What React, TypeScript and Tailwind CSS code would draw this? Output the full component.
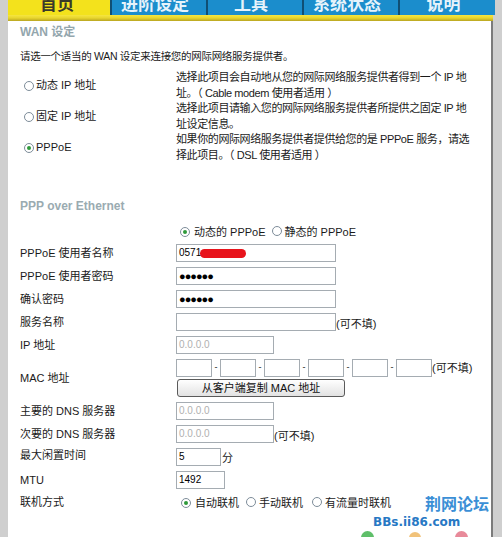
import React from "react";

function Radio({ on = false }: { on?: boolean }) {
  return (
    <span className="inline-flex w-[10px] h-[10px] rounded-full border border-[#7d8c99] bg-white items-center justify-center shrink-0">
      {on && <span className="w-[4px] h-[4px] rounded-full bg-[#2f9a3a]" />}
    </span>
  );
}

function Input({ w, value, pwd, ph }: { w: string; value?: string; pwd?: boolean; ph?: string }) {
  return (
    <div className={`${w} h-[18px] border border-[#a5acb2] bg-white flex items-center pl-[2px] text-[10px] leading-none text-black`}>
      {pwd ? <span className="text-[11px] font-bold tracking-[-1px]">●●●●●●</span> : value ? value : <span className="text-[#b0b0b0]">{ph}</span>}
    </div>
  );
}

const tabs = [
  { t: "进阶设定", w: "w-[96px]" },
  { t: "工具", w: "w-[96px]" },
  { t: "系统状态", w: "w-[96px]" },
  { t: "说明", w: "w-[97px]" },
];

export default function App() {
  return (
    <div className="w-[502px] h-[537px] overflow-hidden bg-[#cfcfcf] flex font-['Liberation_Sans','Noto_Sans_CJK_SC',sans-serif] relative">
      <div className="w-[8px] shrink-0" />
      <div className="w-[487px] shrink-0 flex flex-col">
        <div className="h-[15px] flex overflow-hidden">
          <div className="w-[102px] bg-[#f3e21c] flex justify-center pr-[4px]">
            <span className="text-[17px] leading-[17px] -mt-[4px] font-bold text-[#3a3a2a]">首页</span>
          </div>
          {tabs.map((t) => (
            <div key={t.t} className={`${t.w} bg-[#1b8dcc] border-l-2 border-[#104f74] flex justify-center pr-[8px]`}>
              <span className="text-[17px] leading-[17px] -mt-[4px] font-bold text-[#e6f3fb]">{t.t}</span>
            </div>
          ))}
        </div>
        <div className="h-[6px] w-[485px] bg-gradient-to-b from-[#f6e640] via-[#e8d52c] to-[#b9a522]" />
        <div className="flex flex-1">
          <div className="w-[483px] bg-white pl-[12px] text-[11px] text-[#1a1a1a]">
            <div className="mt-[4px] h-[14px] leading-[14px] text-[12px] font-bold text-[#93a6ad]">WAN 设定</div>
            <div className="mt-[10px] h-[14px] leading-[14px] text-[10.5px] tracking-[-0.3px]">请选一个适当的 WAN 设定来连接您的网际网络服务提供者。</div>
            <div className="mt-[7px] flex flex-col">
              {[
                { l: "动态 IP 地址", on: false, d1: "选择此项目会自动地从您的网际网络服务提供者得到一个 IP 地", d2: "址。（ Cable modem 使用者适用 ）" },
                { l: "固定 IP 地址", on: false, d1: "选择此项目请输入您的网际网络服务提供者所提供之固定 IP 地", d2: "址设定信息。" },
                { l: "PPPoE", on: true, d1: "如果你的网际网络服务提供者提供给您的是 PPPoE 服务，请选", d2: "择此项目。（ DSL 使用者适用 ）" },
              ].map((r) => (
                <div key={r.l} className="flex h-[31px]">
                  <div className="w-[156px] shrink-0 flex items-center pl-[4px] gap-[2px]">
                    <Radio on={r.on} />
                    <span>{r.l}</span>
                  </div>
                  <div className="leading-[15.5px] whitespace-nowrap tracking-[-0.4px]">
                    <div>{r.d1}</div>
                    <div>{r.d2}</div>
                  </div>
                </div>
              ))}
            </div>
            <div className="mt-[36px] h-[14px] leading-[14px] text-[12px] font-bold text-[#9aabb1]">PPP over Ethernet</div>
            <div className="mt-[12px] h-[14px] flex items-center pl-[160px]">
              <Radio on />
              <span className="ml-[4px]">动态的 PPPoE</span>
              <span className="ml-[6px]"><Radio /></span>
              <span className="ml-[3px]">静态的 PPPoE</span>
            </div>
            <div className="mt-[5px] flex flex-col gap-[5px]">
              <div className="flex items-center h-[18px]">
                <div className="w-[156px] shrink-0">PPPoE 使用者名称</div>
                <div className="relative">
                  <Input w="w-[160px]" value="0571" />
                  <div className="absolute left-[24px] top-[5px] w-[46px] h-[9px] rounded-[5px] bg-[#e8141c]" />
                </div>
              </div>
              <div className="flex items-center h-[18px]">
                <div className="w-[156px] shrink-0">PPPoE 使用者密码</div>
                <Input w="w-[160px]" pwd />
              </div>
              <div className="flex items-center h-[18px]">
                <div className="w-[156px] shrink-0">确认密码</div>
                <Input w="w-[160px]" pwd />
              </div>
              <div className="flex items-center h-[18px]">
                <div className="w-[156px] shrink-0">服务名称</div>
                <Input w="w-[160px]" />
                <span className="pt-[4px]">(可不填)</span>
              </div>
              <div className="flex items-center h-[18px]">
                <div className="w-[156px] shrink-0">IP 地址</div>
                <Input w="w-[98px]" ph="0.0.0.0" />
              </div>
              <div className="flex items-center">
                <div className="w-[156px] shrink-0">MAC 地址</div>
                <div className="flex flex-col gap-[2px]">
                  <div className="flex items-center h-[18px]">
                    {[0, 1, 2, 3, 4, 5].map((i) => (
                      <React.Fragment key={i}>
                        <Input w="w-[36px]" />
                        {i < 5 && <span className="w-[8px] text-center text-[9px]">-</span>}
                      </React.Fragment>
                    ))}
                    <span>(可不填)</span>
                  </div>
                  <button className="ml-[1px] w-[168px] h-[18px] rounded-[3px] border border-[#5a5a5a] bg-gradient-to-b from-white to-[#e2e2e2] text-[11px] leading-none text-[#111] flex items-center justify-center">
                    从客户端复制 MAC 地址
                  </button>
                </div>
              </div>
              <div className="flex items-center h-[18px]">
                <div className="w-[156px] shrink-0">主要的 DNS 服务器</div>
                <Input w="w-[98px]" ph="0.0.0.0" />
              </div>
              <div className="flex items-center h-[18px]">
                <div className="w-[156px] shrink-0">次要的 DNS 服务器</div>
                <Input w="w-[98px]" ph="0.0.0.0" />
                <span className="pt-[4px]">(可不填)</span>
              </div>
              <div className="flex items-center h-[18px]">
                <div className="w-[156px] shrink-0 -mt-[3px]">最大闲置时间</div>
                <Input w="w-[45px]" value="5" />
                <span className="ml-[1px] pt-[3px]">分</span>
              </div>
              <div className="flex items-center h-[18px]">
                <div className="w-[156px] shrink-0">MTU</div>
                <Input w="w-[49px]" value="1492" />
              </div>
              <div className="flex items-center h-[18px]">
                <div className="w-[156px] shrink-0 -mt-[2px]">联机方式</div>
                <div className="flex items-center pl-[5px]">
                  <Radio on />
                  <span className="ml-[4px]">自动联机</span>
                  <span className="ml-[7px]"><Radio /></span>
                  <span className="ml-[3px]">手动联机</span>
                  <span className="ml-[9px]"><Radio /></span>
                  <span className="ml-[3px]">有流量时联机</span>
                </div>
              </div>
            </div>
          </div>
          <div className="w-[2px] bg-[#7b7b7b]" />
        </div>
      </div>
      <div className="absolute left-[425px] top-[496px] text-[16px] leading-[18px] font-bold text-[#3b8fd6] tracking-[0px]">荆网论坛</div>
      <div className="absolute left-[373px] top-[515px] text-[12px] leading-[14px] font-bold text-[#2778c4] font-['DejaVu_Sans',sans-serif]">BBs.ii86.com</div>
      <div className="absolute left-[361px] top-[531px] w-[13px] h-[13px] rounded-full bg-[#5fbf6a]" />
      <div className="absolute left-[409px] top-[532px] w-[12px] h-[12px] rounded-full bg-[#f1c27a]" />
      <div className="absolute left-[455px] top-[531px] w-[13px] h-[13px] rounded-full bg-[#e88a9a]" />
    </div>
  );
}
